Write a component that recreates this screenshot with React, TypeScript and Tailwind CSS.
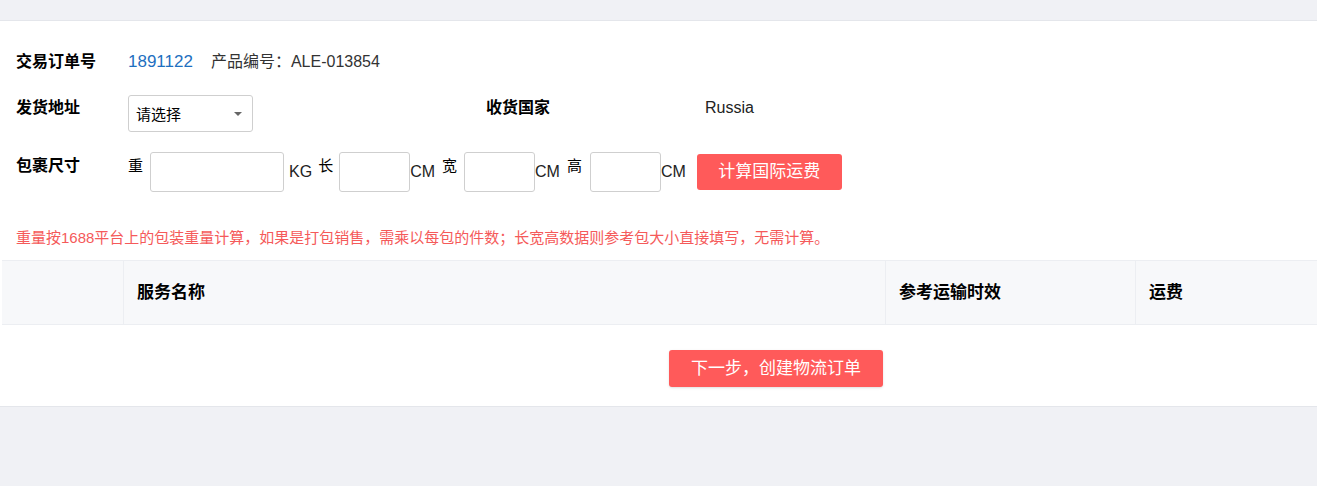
export default function App() {
  return (
    <div
      className="min-h-[486px] bg-[#f0f1f5] text-[#333]"
      style={{ fontFamily: '"Liberation Sans", "Noto Sans CJK SC", sans-serif' }}
    >
      <div className="h-[20px]" />
      <div className="border-y border-[#e4e6eb] bg-white">
        <div className="px-4 pt-[30px]">
          <div className="flex h-[22px] items-center text-[16px]">
            <span className="w-[112px] font-bold text-black">交易订单号</span>
            <span className="text-[17px] text-[#1e6fc0]">1891122</span>
            <span className="ml-[18px] text-[#333]">产品编号：ALE-013854</span>
          </div>
          <div className="mt-[22px] flex items-start text-[15px]">
            <span className="mt-[1px] w-[112px] text-[16px] font-bold text-black">发货地址</span>
            <div className="flex h-[37px] w-[125px] items-center justify-between rounded-[3px] border border-[#cfcfcf] pl-[7px] pr-[10px]">
              <span className="mt-[4px] text-black">请选择</span>
              <span className="h-0 w-0 border-x-[4px] border-t-[4px] border-x-transparent border-t-[#666]" />
            </div>
            <span className="ml-[233px] mt-[1px] w-[219px] text-[16px] font-bold text-black">收货国家</span>
            <span className="mt-[1px] text-[16px] text-[#222]">Russia</span>
          </div>
          <div className="mt-[20px] flex items-start text-[15px]">
            <span className="mt-[2px] w-[112px] text-[16px] font-bold text-black">包裹尺寸</span>
            <span className="mt-[3px] text-black">重</span>
            <div className="ml-[7px] h-[40px] w-[134px] rounded-[3px] border border-[#cfcfcf]" />
            <span className="ml-[5px] mt-[8px] text-[16px] text-[#222]">KG</span>
            <span className="ml-[6px] mt-[3px] text-black">长</span>
            <div className="ml-[6px] h-[40px] w-[71px] rounded-[3px] border border-[#cfcfcf]" />
            <span className="mt-[8px] text-[16px] text-[#222]">CM</span>
            <span className="ml-[7px] mt-[3px] text-black">宽</span>
            <div className="ml-[7px] h-[40px] w-[71px] rounded-[3px] border border-[#cfcfcf]" />
            <span className="mt-[8px] text-[16px] text-[#222]">CM</span>
            <span className="ml-[7px] mt-[3px] text-black">高</span>
            <div className="ml-[8px] h-[40px] w-[71px] rounded-[3px] border border-[#cfcfcf]" />
            <span className="mt-[8px] text-[16px] text-[#222]">CM</span>
            <button className="ml-[11px] mt-[2px] h-[36px] w-[145px] rounded-[3px] bg-[#ff5a5a] text-[17px] text-white">
              计算国际运费
            </button>
          </div>
          <p className="mt-[36px] text-[15px] leading-[20px] text-[#f55a5a]">
            重量按1688平台上的包装重量计算，如果是打包销售，需乘以每包的件数；长宽高数据则参考包大小直接填写，无需计算。
          </p>
        </div>
        <div className="ml-[2px] mt-[12px] grid h-[65px] grid-cols-[122px_762px_250px_1fr] border-y border-[#eceef2] bg-[#f7f8fa] text-[17px] font-bold text-black">
          <div className="border-r border-[#eceef2]" />
          <div className="flex items-center border-r border-[#eceef2] pl-[13px]">服务名称</div>
          <div className="flex items-center border-r border-[#eceef2] pl-[13px]">参考运输时效</div>
          <div className="flex items-center pl-[13px]">运费</div>
        </div>
        <div className="h-[81px] pl-[669px] pt-[25px]">
          <button className="h-[37px] w-[214px] rounded-[3px] bg-[#ff5a5a] text-[17px] text-white shadow-sm">
            下一步，创建物流订单
          </button>
        </div>
      </div>
    </div>
  );
}
